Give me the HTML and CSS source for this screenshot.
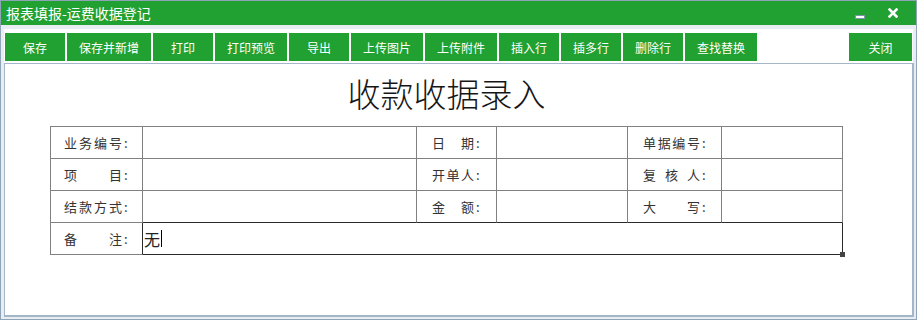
FILE: index.html
```html
<!DOCTYPE html>
<html lang="zh-CN">
<head>
<meta charset="utf-8">
<title>报表填报-运费收据登记</title>
<link rel="stylesheet" href="styles.css">
</head>
<body>
<div class="window">
  <div class="titlebar">
    <span class="title-text">报表填报-运费收据登记</span>
    <div class="controls">
      <span class="min-icon"></span>
      <svg class="close-icon" width="10" height="10" viewBox="0 0 10 10"><path d="M1.5 1.5 L8.5 8.5 M8.5 1.5 L1.5 8.5" stroke="#fff" stroke-width="2.6" stroke-linecap="square"/></svg>
    </div>
  </div>
  <div class="toolbar">
    <span class="btn w60">保存</span>
    <span class="btn w84">保存并新增</span>
    <span class="btn w60">打印</span>
    <span class="btn w72">打印预览</span>
    <span class="btn w60">导出</span>
    <span class="btn w72">上传图片</span>
    <span class="btn w72">上传附件</span>
    <span class="btn w60">插入行</span>
    <span class="btn w60">插多行</span>
    <span class="btn w60">删除行</span>
    <span class="btn w72">查找替换</span>
    <span class="btn w64 push">关闭</span>
  </div>
  <div class="frame">
    <div class="sheet">
      <div class="sheet-title">收款收据录入</div>
      <div class="grid">
        <div class="cell lbl c1"><span class="j w58"><i>业</i><i>务</i><i>编</i><i>号</i></span><span class="colon">:</span></div>
        <div class="cell"></div>
        <div class="cell lbl c3"><span class="j w42"><i>日</i><i>期</i></span><span class="colon">:</span></div>
        <div class="cell"></div>
        <div class="cell lbl c5"><span class="j w57"><i>单</i><i>据</i><i>编</i><i>号</i></span><span class="colon">:</span></div>
        <div class="cell"></div>

        <div class="cell lbl c1"><span class="j w58"><i>项</i><i>目</i></span><span class="colon">:</span></div>
        <div class="cell"></div>
        <div class="cell lbl c3"><span class="j w42"><i>开</i><i>单</i><i>人</i></span><span class="colon">:</span></div>
        <div class="cell"></div>
        <div class="cell lbl c5"><span class="j w57"><i>复</i><i>核</i><i>人</i></span><span class="colon">:</span></div>
        <div class="cell"></div>

        <div class="cell lbl c1"><span class="j w58"><i>结</i><i>款</i><i>方</i><i>式</i></span><span class="colon">:</span></div>
        <div class="cell dark-b"></div>
        <div class="cell lbl c3 dark-b"><span class="j w42"><i>金</i><i>额</i></span><span class="colon">:</span></div>
        <div class="cell dark-b"></div>
        <div class="cell lbl c5 dark-b"><span class="j w57"><i>大</i><i>写</i></span><span class="colon">:</span></div>
        <div class="cell dark-b"></div>

        <div class="cell lbl c1 dark-r"><span class="j w58"><i>备</i><i>注</i></span><span class="colon">:</span></div>
        <div class="cell remark"><span class="remark-text">无</span><span class="caret"></span><span class="grip"></span></div>
      </div>
    </div>
  </div>
</div>
</body>
</html>
```

FILE: styles.css
```css
* { box-sizing: border-box; }
html, body { margin: 0; padding: 0; background: #ffffff; }
body {
  font-family: "Noto Sans CJK SC", "Liberation Sans", sans-serif;
}
.window {
  width: 917px;
  height: 320px;
  border: 1px solid #90a4b8;
  background: #e7edf2;
  display: flex;
  flex-direction: column;
}
.titlebar {
  height: 24px;
  flex: none;
  background: #21a131;
  color: #ffffff;
  display: flex;
  align-items: center;
  padding-left: 5px;
  padding-right: 18px;
  font-size: 14px;
  line-height: 24px;
}
.controls {
  margin-left: auto;
  display: flex;
  align-items: center;
  gap: 23px;
  height: 100%;
}
.min-icon {
  width: 10px;
  height: 4px;
  background: #ffffff;
  border: 1px solid #8094aa;
  margin-top: 8px;
}
.close-icon { display: block; }
.toolbar {
  flex: none;
  margin: 4px 3px 0 3px;
  background: #ffffff;
  display: flex;
  gap: 2px;
  padding: 4px 1px 2px 1px;
}
.btn {
  height: 28px;
  background: #21a131;
  color: #ffffff;
  font-size: 12px;
  display: flex;
  align-items: center;
  justify-content: center;
}
.w60 { width: 60px; }
.w64 { width: 63px; }
.w72 { width: 72px; }
.w84 { width: 84px; }
.push { margin-left: auto; }
.frame {
  flex: 1;
  margin: 0 2px 2px 3px;
  background: #ffffff;
  border-style: solid;
  border-color: #a5b6c8;
  border-width: 1px 2px 2px 1px;
}
.sheet {
  width: 793px;
  margin-left: 45px;
}
.sheet-title {
  margin-top: 7px;
  margin-bottom: 11px;
  height: 44px;
  line-height: 44px;
  font-size: 33px;
  color: #161616;
  text-align: center;
  font-weight: 300;
}
.grid {
  display: grid;
  grid-template-columns: 92px 274px 80px 131px 94px 121px;
  grid-auto-rows: 32px;
  border-top: 1px solid #808080;
  border-left: 1px solid #808080;
}
.cell {
  border-right: 1px solid #808080;
  border-bottom: 1px solid #808080;
  display: flex;
  align-items: center;
  color: #333333;
  font-size: 13px;
}
.c1 { padding-left: 13px; }
.c3 { padding-left: 15px; }
.c5 { padding-left: 15px; }
.j {
  display: flex;
  justify-content: space-between;
}
.j i { font-style: normal; }
.w58 { width: 58px; }
.w57 { width: 57px; }
.w42 { width: 42px; }
.colon { margin-left: 2px; }
.dark-b { border-bottom-color: #2a2a2a; }
.dark-r { border-right-color: #2a2a2a; }
.remark {
  grid-column: span 5;
  position: relative;
  border-right-color: #2a2a2a;
  border-bottom-color: #2a2a2a;
  padding-left: 1px;
  font-size: 16px;
  color: #222222;
}
.caret {
  width: 1px;
  height: 17px;
  background: #000000;
  margin-left: 1px;
}
.grip {
  position: absolute;
  right: -3px;
  bottom: -3px;
  width: 5px;
  height: 5px;
  background: #444444;
}
```
